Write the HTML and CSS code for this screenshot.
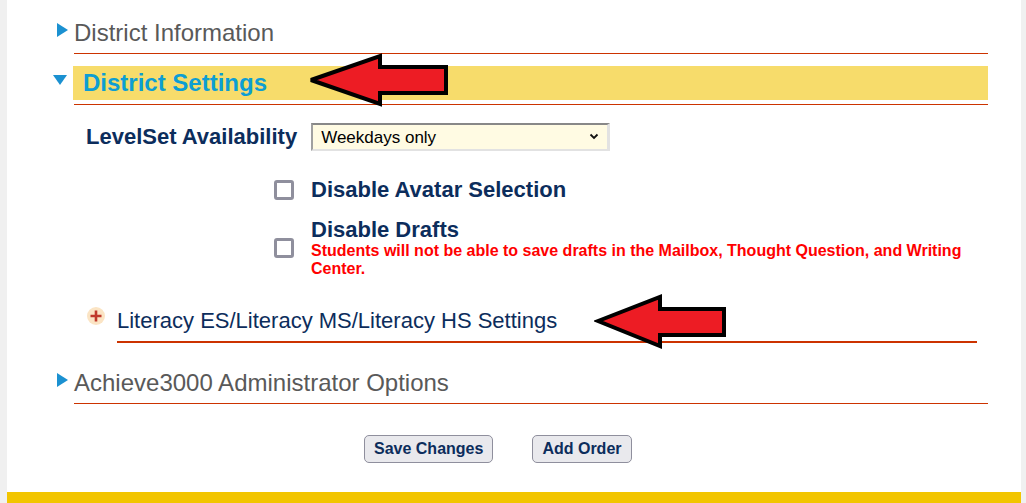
FILE: index.html
```html
<!DOCTYPE html>
<html lang="en">
<head>
    <meta charset="UTF-8">
    <title>District Settings</title>
    <link rel="stylesheet" href="styles.css">
</head>
<body>
    <div class="page">
        <!-- Collapsed section -->
        <div class="section first">
            <div class="section-head">
                <span class="tri tri-right"></span>
                <span class="section-title">District Information</span>
            </div>
        </div>

        <!-- Open section -->
        <div class="section open">
            <div class="section-head">
                <span class="tri tri-down"></span>
                <span class="section-title">District Settings</span>
            </div>

            <div class="field-row">
                <label for="levelset">LevelSet Availability</label>
                <div class="select-wrap">
                    <select id="levelset">
                        <option>Weekdays only</option>
                        <option>Every day</option>
                    </select>
                    <svg class="chevron" width="10" height="7" viewBox="0 0 10 7">
                        <path d="M1.5 1.5 L5 5 L8.5 1.5" fill="none" stroke="#111" stroke-width="1.8"/>
                    </svg>
                </div>
            </div>

            <div class="check-row row-avatar">
                <input type="checkbox" id="avatar">
                <label for="avatar" class="check-text">
                    <span class="check-title">Disable Avatar Selection</span>
                </label>
            </div>

            <div class="check-row row-drafts">
                <input type="checkbox" id="drafts">
                <label for="drafts" class="check-text">
                    <span class="check-title">Disable Drafts</span>
                    <span class="check-note">Students will not be able to save drafts in the Mailbox, Thought Question, and Writing Center.</span>
                </label>
            </div>

            <div class="sub-head">
                <svg class="plus" width="18" height="18" viewBox="0 0 18 18">
                    <circle cx="9" cy="9" r="9" fill="#fbe4c4"/>
                    <path d="M3.5 9 H14.5 M9 3.5 V14.5" stroke="#c0392b" stroke-width="2.6"/>
                </svg>
                <span class="sub-title">Literacy ES/Literacy MS/Literacy HS Settings</span>
            </div>
        </div>

        <!-- Collapsed section -->
        <div class="section last">
            <div class="section-head">
                <span class="tri tri-right"></span>
                <span class="section-title">Achieve3000 Administrator Options</span>
            </div>
        </div>

        <div class="actions">
            <button type="button">Save Changes</button>
            <button type="button">Add Order</button>
        </div>

        <div class="footer-bar"></div>

        <!-- Annotation arrows drawn over the page -->
        <svg class="arrow arrow-1" width="145" height="56" viewBox="0 0 145 56">
            <polygon points="4,28 73,4 73,15 139,15 139,41 73,41 73,52" fill="#ed1c24" stroke="#000" stroke-width="4" stroke-miterlimit="3"/>
        </svg>
        <svg class="arrow arrow-2" width="136" height="58" viewBox="0 0 136 58">
            <polygon points="4,28 66,4 66,16 130,16 130,42 66,42 66,53" fill="#ed1c24" stroke="#000" stroke-width="4" stroke-miterlimit="3"/>
        </svg>
    </div>
</body>
</html>
```

FILE: styles.css
```css
/* Base page */
body {
    margin: 0;
    background: #f0f0f0;
    font-family: "Liberation Sans", Arial, sans-serif;
    overflow: hidden;
}

.page {
    position: relative;
    margin-left: 7px;
    width: 1014px;
    height: 503px;
    background: #ffffff;
    display: flex;
    flex-direction: column;
}

/* Sections */
.section {
    margin: 0 33px 0 67px;
}

.section.first {
    margin-top: 19px;
}

.section.open {
    margin-top: 12px;
}

.section.last {
    margin-top: 26px;
}

.section-head {
    display: flex;
    align-items: flex-start;
    padding-bottom: 6px;
    border-bottom: 1px solid #cc3300;
}

.section-title {
    font-size: 24px;
    line-height: 28px;
    color: #595959;
}

.open .section-head {
    padding-bottom: 4px;
}

.open .section-title {
    flex: 1;
    background: #f7dc6b;
    color: #0d9ed3;
    font-weight: bold;
    line-height: 34px;
    padding-left: 10px;
}

/* Triangles */
.tri {
    flex: none;
    width: 0;
    height: 0;
}

.tri-right {
    margin: 4px 6px 0 -17px;
    border-left: 11px solid #1b91d1;
    border-top: 7px solid transparent;
    border-bottom: 7px solid transparent;
}

.tri-down {
    margin: 9px 6px 0 -21px;
    border-top: 10px solid #1b91d1;
    border-left: 7.5px solid transparent;
    border-right: 7.5px solid transparent;
}

/* LevelSet row */
.field-row {
    display: flex;
    align-items: center;
    gap: 14px;
    margin-top: 18px;
    padding-left: 12px;
}

.field-row label {
    font-size: 22px;
    font-weight: bold;
    color: #0c2d5c;
}

.select-wrap {
    position: relative;
}

.select-wrap select {
    appearance: none;
    width: 299px;
    height: 28px;
    padding: 0 0 0 8px;
    font-family: "Liberation Sans", Arial, sans-serif;
    font-size: 17px;
    color: #000;
    background: #fffbe3;
    border-style: solid;
    border-width: 2px 3px 2px 2px;
    border-color: #888 #e2e2e2 #e2e2e2 #a0a0a0;
    border-radius: 0;
}

.chevron {
    position: absolute;
    right: 11px;
    top: 10px;
}

/* Checkbox rows */
.check-row {
    display: flex;
    align-items: center;
    padding-left: 200px;
}

.row-avatar {
    margin-top: 27px;
}

.row-drafts {
    margin-top: 16px;
}

.check-row input {
    appearance: none;
    flex: none;
    width: 20px;
    height: 20px;
    margin: 0 17px 0 0;
    border: 3px solid #8f8f9d;
    border-radius: 3px;
    background: #fff;
}

.check-text {
    display: flex;
    flex-direction: column;
}

.check-title {
    font-size: 22px;
    line-height: 24px;
    font-weight: bold;
    color: #0c2d5c;
}

.check-note {
    max-width: 665px;
    font-size: 16px;
    line-height: 18px;
    font-weight: bold;
    color: #ff0000;
}

/* Literacy sub heading */
.sub-head {
    display: flex;
    align-items: flex-start;
    margin: 30px 11px 0 43px;
    padding-bottom: 7px;
    border-bottom: 2px solid #cc3300;
}

.plus {
    flex: none;
    margin: -1px 12px 0 -30px;
}

.sub-title {
    font-size: 22px;
    line-height: 26px;
    color: #0c2d5c;
}

/* Buttons */
.actions {
    display: flex;
    gap: 39px;
    margin-top: 31px;
    padding-left: 357px;
}

.actions button {
    height: 28px;
    padding: 0 9px;
    font-family: "Liberation Sans", Arial, sans-serif;
    font-size: 16px;
    font-weight: bold;
    color: #0c2d5c;
    background: #e9e9ed;
    border: 1px solid #8f8f9d;
    border-radius: 5px;
}

.footer-bar {
    margin-top: auto;
    height: 11px;
    background: #f2c500;
}

/* Annotation arrows */
.arrow {
    position: absolute;
}

.arrow-1 {
    left: 300px;
    top: 52px;
}

.arrow-2 {
    left: 587px;
    top: 293px;
}
```
